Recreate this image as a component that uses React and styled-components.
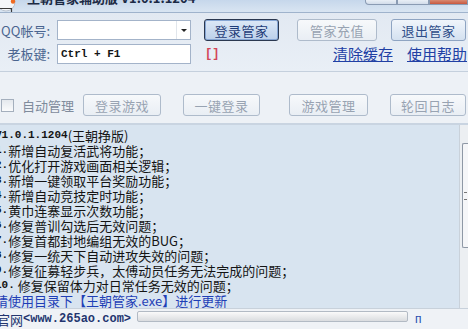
import React from "react";
import styled, { createGlobalStyle, css } from "styled-components";

const GlobalStyle = createGlobalStyle`
  html, body {
    margin: 0;
    padding: 0;
    background: #e7edf4;
    overflow: hidden;
  }
  body {
    font-family: "Noto Sans CJK SC", "Liberation Sans", sans-serif;
  }
`;

const Window = styled.div`
  width: 468px;
  height: 329px;
  overflow: hidden;
  display: flex;
  flex-direction: column;
  background: #e7edf4;
`;

const TitleBar = styled.div`
  height: 12px;
  flex: none;
  display: flex;
  align-items: flex-start;
  overflow: hidden;
  background: linear-gradient(#c6d7eb, #d9e5f2);
  border-bottom: 1px solid #9fb3cc;
`;

const AppIcon = styled.svg`
  flex: none;
  width: 20px;
  height: 12px;
`;

const TitleText = styled.div`
  margin: -9px 0 0 7px;
  font-size: 13px;
  line-height: 14px;
  font-weight: 700;
  color: #1c2a44;
  white-space: nowrap;
`;

const Controls = styled.div`
  margin-left: auto;
  display: flex;
  height: 5px;
`;

const Ctrl = styled.div`
  width: ${(p) => p.$w}px;
  height: 4px;
  border: 1px solid #8a9bb3;
  border-top: none;
  background: ${(p) => (p.$close ? "linear-gradient(#d88a72, #c8583f)" : "linear-gradient(#e9eff6, #d2dcea)")};
  border-radius: ${(p) => (p.$first ? "0 0 0 4px" : "0")};
`;

const TopPanel = styled.div`
  flex: none;
  height: 59px;
  padding-top: 6px;
  box-sizing: border-box;
  display: flex;
  flex-direction: column;
  gap: 2px;
  background: linear-gradient(#e2e9f2, #e9eff6);
  border-bottom: 1px solid #c5d0dd;
`;

const Row = styled.div`
  display: flex;
  align-items: center;
  height: ${(p) => p.$h}px;
`;

const Label = styled.div`
  flex: none;
  width: 50px;
  display: flex;
  justify-content: flex-end;
  white-space: nowrap;
  font-size: 13px;
  color: #4a6590;
`;

const Field = styled.div`
  flex: none;
  margin-left: 7px;
  width: 134px;
  height: 20px;
  box-sizing: border-box;
  border: 1px solid #a3b3c9;
  background: #fff;
  display: flex;
  align-items: center;
`;

const FieldText = styled.span`
  flex: 1;
  padding-left: 3px;
  font-family: "Liberation Mono", monospace;
  font-weight: 700;
  font-size: 11px;
  color: #151515;
  white-space: pre;
`;

const DropArrow = styled.div`
  flex: none;
  width: 13px;
  height: 100%;
  border-left: 1px solid #e1e6ec;
  display: flex;
  align-items: center;
  justify-content: center;
  &::after {
    content: "";
    border-left: 3px solid transparent;
    border-right: 3px solid transparent;
    border-top: 3px solid #222;
  }
`;

const buttonVariants = {
  focus: css`
    border: 1px solid #2b3850;
    box-shadow: inset 0 0 0 1px #86a6d4;
    background: linear-gradient(#dce8f7, #bcd0ea);
    color: #1f3c78;
  `,
  normal: css`
    border: 1px solid #8ea4c2;
    background: linear-gradient(#f0f5fb, #d4e1f0);
    color: #2d4c88;
  `,
  disabled: css`
    border: 1px solid #aebbcb;
    background: linear-gradient(#f7f9fb, #e9eef4);
    color: #98a3b2;
  `,
};

const Button = styled.div`
  flex: none;
  box-sizing: border-box;
  width: ${(p) => p.$w}px;
  height: 22px;
  margin-left: ${(p) => p.$ml}px;
  border-radius: 3px;
  display: flex;
  align-items: center;
  justify-content: center;
  font-size: 13px;
  letter-spacing: 0.5px;
  ${(p) => buttonVariants[p.$variant]}
`;

const KeyMark = styled.span`
  margin-left: 14px;
  font-family: "Liberation Mono", monospace;
  font-size: 12px;
  font-weight: 700;
  color: #d24457;
`;

const Links = styled.div`
  margin-left: auto;
  display: flex;
  gap: 14px;
  padding-right: 1px;
`;

const HelpLink = styled.a`
  font-size: 15px;
  color: #2140a4;
  text-decoration: underline;
  white-space: nowrap;
`;

const ActionPanel = styled.div`
  flex: none;
  height: 53px;
  box-sizing: border-box;
  padding-top: 22px;
  background: #edf1f6;
  border-bottom: 2px solid #c9d4e1;
`;

const Check = styled.div`
  flex: none;
  width: 13px;
  height: 13px;
  box-sizing: border-box;
  margin-left: 1px;
  border: 1px solid #a4afbd;
  background: linear-gradient(#e4e8ed, #fafbfc);
`;

const CheckLabel = styled.span`
  margin-left: 8px;
  font-size: 13px;
  color: #7f8b9c;
  white-space: nowrap;
`;

const LogArea = styled.div`
  flex: 1;
  min-height: 0;
  display: flex;
  overflow: hidden;
  background: #d8e4f0;
`;

const LogText = styled.div`
  flex: 1;
  min-width: 0;
  margin-left: -5px;
  padding-top: 3px;
  font-size: 13px;
  color: #141414;
  white-space: pre;
  overflow: hidden;
`;

const LogLine = styled.div`
  height: 15px;
  line-height: 15px;
  display: flex;
  align-items: center;
  color: ${(p) => (p.$blue ? "#1f3fb6" : "inherit")};
`;

const Ascii = styled.span`
  font-family: "Liberation Mono", monospace;
  font-size: ${(p) => p.$size || 11}px;
  font-weight: 700;
`;

const ScrollBar = styled.div`
  flex: none;
  width: 8px;
  background: #eceff2;
  border-left: 1px solid #c9d1da;
  padding-top: 18px;
`;

const Thumb = styled.div`
  height: 105px;
  margin-left: 2px;
  box-sizing: border-box;
  border: 1px solid #8e98a5;
  border-right: none;
  border-radius: 2px 0 0 2px;
  background: #f5f6f8;
  display: flex;
  align-items: center;
  &::after {
    content: "";
    width: 3px;
    height: 6px;
    margin-left: 1px;
    border-top: 1px solid #777;
    border-bottom: 1px solid #777;
  }
`;

const StatusBar = styled.div`
  flex: none;
  height: 20px;
  display: flex;
  align-items: center;
  background: #eff2f6;
  border-top: 1px solid #c8d1db;
`;

const SiteLink = styled.span`
  margin-left: -3px;
  display: flex;
  align-items: center;
  font-size: 13px;
  color: #23356f;
  white-space: nowrap;
`;

const Progress = styled.div`
  flex: none;
  margin: 0 0 5px 6px;
  width: 271px;
  height: 11px;
  box-sizing: border-box;
  border: 1px solid #b2bac4;
  border-radius: 2px;
  background: linear-gradient(#fafafa, #dadcdf);
`;

const StatusTail = styled.span`
  margin-left: 7px;
  font-family: "Liberation Sans", sans-serif;
  font-size: 12px;
  color: #2a4bb0;
`;

const logLines = [
  { t: ["V1.0.1.1204", "(王朝挣版)"] },
  { t: ["1.", "新增自动复活武将功能；"] },
  { t: ["2.", "优化打开游戏画面相关逻辑；"] },
  { t: ["3.", "新增一键领取平台奖励功能；"] },
  { t: ["4.", "新增自动竞技定时功能；"] },
  { t: ["5.", "黄巾连寨显示次数功能；"] },
  { t: ["6.", "修复普训勾选后无效问题；"] },
  { t: ["7.", "修复首都封地编组无效的BUG；"] },
  { t: ["8.", "修复一统天下自动进攻失效的问题；"] },
  { t: ["9.", "修复征募轻步兵，太傅动员任务无法完成的问题；"] },
  { t: ["10.", " 修复保留体力对日常任务无效的问题；"] },
  { t: ["", "请使用目录下【王朝管家.exe】进行更新"], blue: true },
];

export default function App() {
  return (
    <>
      <GlobalStyle />
      <Window>
        <TitleBar>
          <AppIcon viewBox="0 0 20 12">
            <circle cx="6" cy="2" r="9" fill="#f4f6f9" stroke="#b9c3cf" strokeWidth="1" />
            <path d="M0 8.5h11.5V12" fill="none" stroke="#3b3b3b" strokeWidth="1.2" />
            <circle cx="13" cy="1.5" r="2.2" fill="#ef6b22" />
          </AppIcon>
          <TitleText>王朝管家辅助版 V1.0.1.1204</TitleText>
          <Controls>
            <Ctrl $w={30} $first />
            <Ctrl $w={30} />
            <Ctrl $w={37} $close />
          </Controls>
        </TitleBar>

        <TopPanel>
          <Row $h={22}>
            <Label>QQ帐号:</Label>
            <Field>
              <FieldText />
              <DropArrow />
            </Field>
            <Button $variant="focus" $w={75} $ml={13}>登录管家</Button>
            <Button $variant="disabled" $w={80} $ml={18}>管家充值</Button>
            <Button $variant="normal" $w={75} $ml={14}>退出管家</Button>
          </Row>
          <Row $h={21}>
            <Label>老板键:</Label>
            <Field>
              <FieldText>Ctrl + F1</FieldText>
            </Field>
            <KeyMark>[]</KeyMark>
            <Links>
              <HelpLink>清除缓存</HelpLink>
              <HelpLink>使用帮助</HelpLink>
            </Links>
          </Row>
        </TopPanel>

        <ActionPanel>
          <Row $h={22}>
            <Check />
            <CheckLabel>自动管理</CheckLabel>
            <Button $variant="disabled" $w={78} $ml={9}>登录游戏</Button>
            <Button $variant="disabled" $w={77} $ml={22}>一键登录</Button>
            <Button $variant="disabled" $w={79} $ml={29}>游戏管理</Button>
            <Button $variant="disabled" $w={76} $ml={22}>轮回日志</Button>
          </Row>
        </ActionPanel>

        <LogArea>
          <LogText>
            {logLines.map((l, i) => (
              <LogLine key={i} $blue={l.blue}>
                <Ascii>{l.t[0]}</Ascii>
                {l.t[1]}
              </LogLine>
            ))}
          </LogText>
          <ScrollBar>
            <Thumb />
          </ScrollBar>
        </LogArea>

        <StatusBar>
          <SiteLink>
            官网<Ascii $size={12}>{"<www.265ao.com>"}</Ascii>
          </SiteLink>
          <Progress />
          <StatusTail>п</StatusTail>
        </StatusBar>
      </Window>
    </>
  );
}
